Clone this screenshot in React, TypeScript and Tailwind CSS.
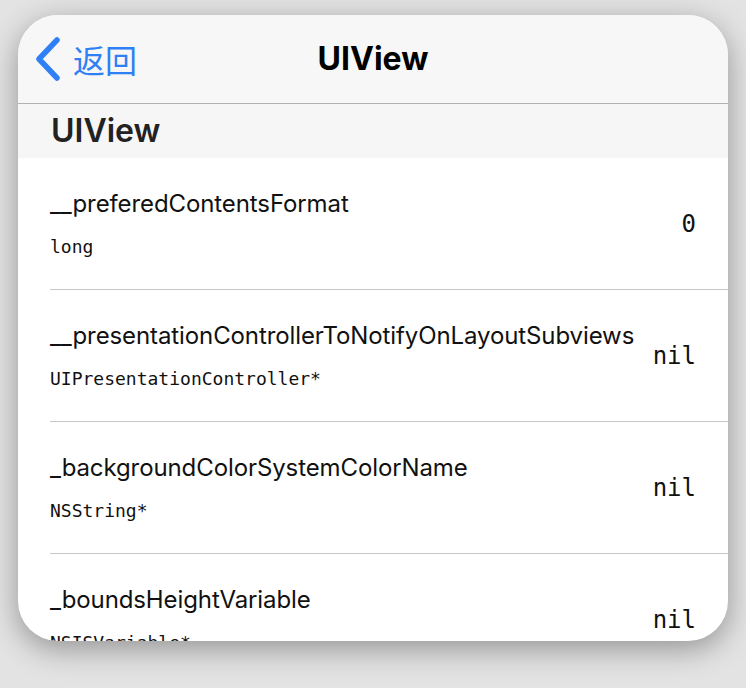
const rows = [
  { name: '__preferedContentsFormat', type: 'long', value: '0' },
  { name: '__presentationControllerToNotifyOnLayoutSubviews', type: 'UIPresentationController*', value: 'nil' },
  { name: '_backgroundColorSystemColorName', type: 'NSString*', value: 'nil' },
  { name: '_boundsHeightVariable', type: 'NSISVariable*', value: 'nil' },
];

const sans = "font-['Inter','Noto_Sans_CJK_SC',sans-serif]";
const mono = "font-['DejaVu_Sans_Mono',monospace]";

function BackButton() {
  return (
    <button className="absolute left-[17px] top-0 flex h-full items-center gap-[12px] text-[#2f7ff5]">
      <svg width="26" height="44" viewBox="0 0 26 44" fill="none" aria-hidden>
        <path d="M22 3L4 22L22 41" stroke="#2f7ff5" strokeWidth="5.5" strokeLinecap="round" strokeLinejoin="round" />
      </svg>
      <span className="text-[32px] leading-none font-['Noto_Sans_CJK_SC',sans-serif]">返回</span>
    </button>
  );
}

function PropertyRow({ name, type, value }: { name: string; type: string; value: string }) {
  return (
    <div className="ml-[32px] flex h-[132px] shrink-0 items-center justify-between border-b border-[#c8c8c8] pr-[32px]">
      <div className="flex flex-col">
        <span className={`${sans} whitespace-nowrap text-[24px] leading-[30px] tracking-[-0.1px] text-[#111]`}>{name}</span>
        <span className={`${mono} mt-[17px] whitespace-nowrap text-[18px] leading-[22px] text-[#111]`}>{type}</span>
      </div>
      <span className={`${mono} text-[24px] leading-none text-[#111]`}>{value}</span>
    </div>
  );
}

export default function App() {
  return (
    <div className="h-[688px] w-[746px] overflow-hidden bg-[#e3e3e3] pl-[18px] pt-[15px]">
      <div className="flex h-[626px] w-[710px] flex-col overflow-hidden rounded-[40px] bg-white shadow-[0_8px_30px_rgba(0,0,0,0.35)]">
        <div className="relative flex h-[89px] shrink-0 items-center justify-center border-b border-[#b2b2b2] bg-[#f7f7f7]">
          <BackButton />
          <h1 className={`${sans} text-[32px] font-bold text-black`}>UIView</h1>
        </div>
        <div className="flex h-[54px] shrink-0 items-center bg-[#f6f6f6] pl-[33px]">
          <h2 className={`${sans} text-[32px] font-semibold text-[#222]`}>UIView</h2>
        </div>
        {rows.map((r) => (
          <PropertyRow key={r.name} {...r} />
        ))}
      </div>
    </div>
  );
}
